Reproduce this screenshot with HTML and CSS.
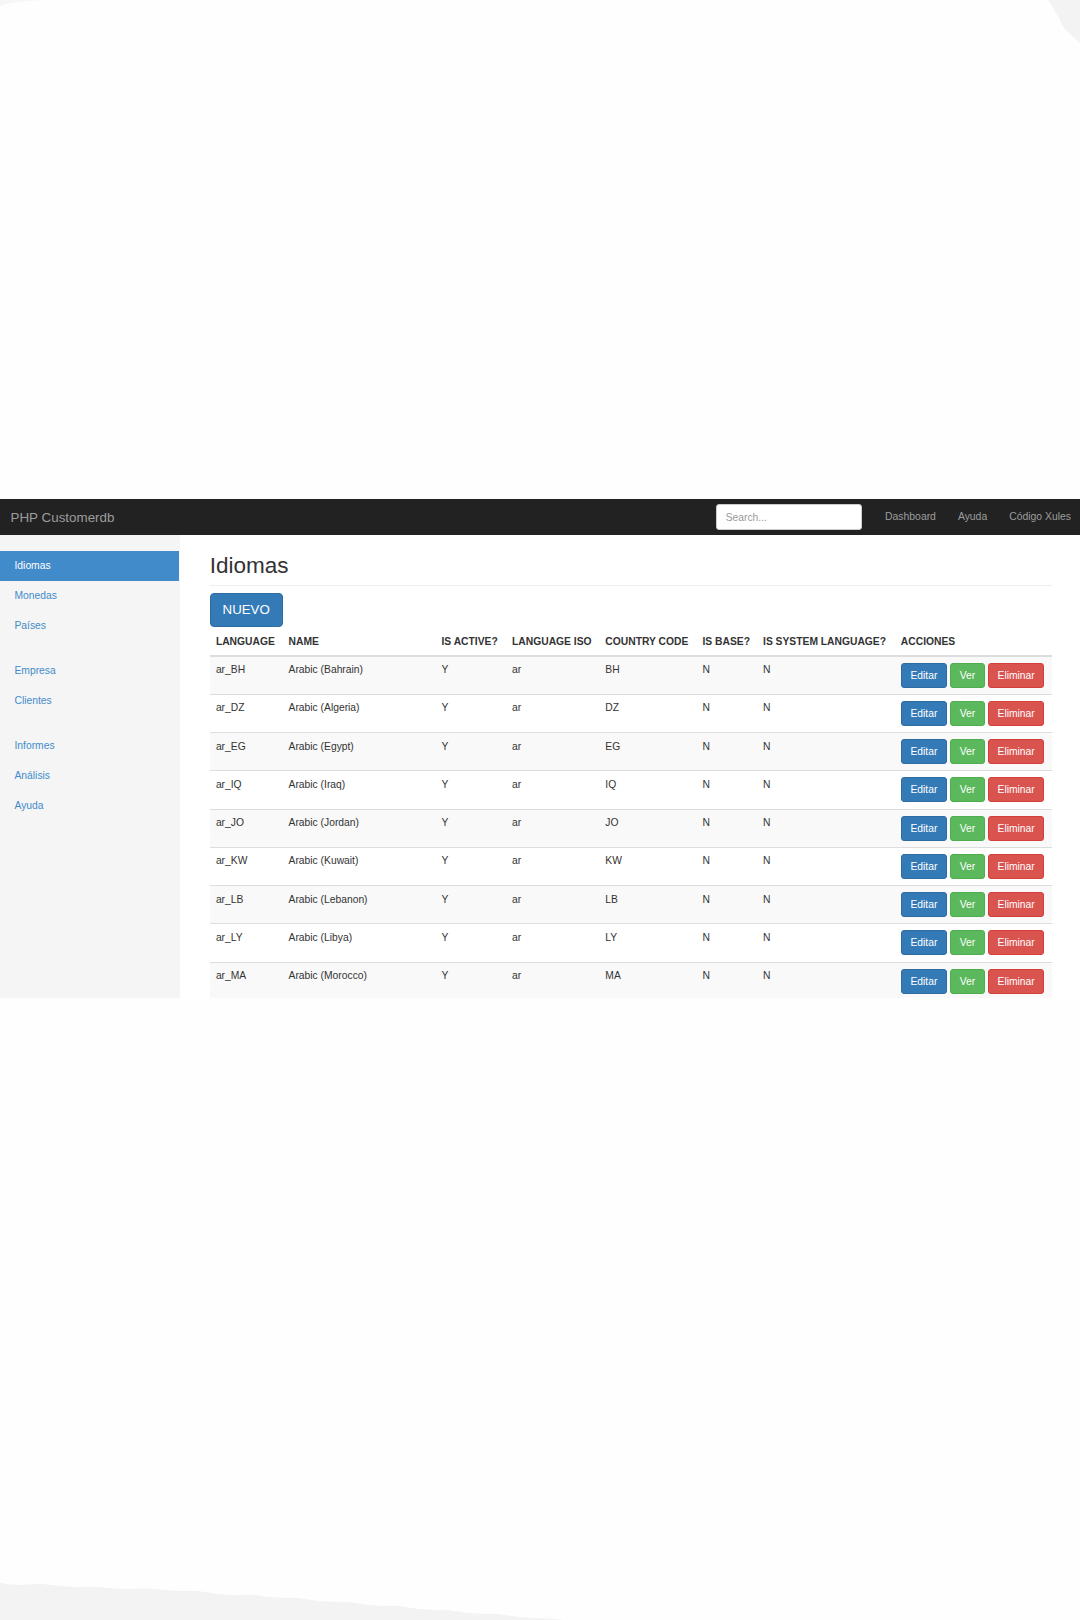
FILE: index.html
```html
<!DOCTYPE html>
<html lang="es">
<head>
<meta charset="utf-8">
<title>PHP Customerdb - Idiomas</title>
<link rel="stylesheet" href="styles.css">
</head>
<body>
<div class="page">
  <div class="app">
    <nav class="navbar">
      <a class="brand" href="#">PHP Customerdb</a>
      <input class="search" type="text" placeholder="Search...">
      <ul class="nav-links">
        <li><a href="#">Dashboard</a></li>
        <li><a href="#">Ayuda</a></li>
        <li><a href="#">Código Xules</a></li>
      </ul>
    </nav>
    <div class="body-row">
      <aside class="sidebar">
        <ul class="side-group">
          <li><a class="active" href="#">Idiomas</a></li>
          <li><a href="#">Monedas</a></li>
          <li><a href="#">Países</a></li>
        </ul>
        <ul class="side-group">
          <li><a href="#">Empresa</a></li>
          <li><a href="#">Clientes</a></li>
        </ul>
        <ul class="side-group">
          <li><a href="#">Informes</a></li>
          <li><a href="#">Análisis</a></li>
          <li><a href="#">Ayuda</a></li>
        </ul>
      </aside>
      <main class="main">
        <h1 class="page-title">Idiomas</h1>
        <button class="btn-new">NUEVO</button>
        <table class="grid">
          <colgroup>
            <col class="c1"><col class="c2"><col class="c3"><col class="c4">
            <col class="c5"><col class="c6"><col class="c7"><col class="c8">
          </colgroup>
          <thead>
            <tr>
              <th>LANGUAGE</th><th>NAME</th><th>IS ACTIVE?</th><th>LANGUAGE ISO</th>
              <th>COUNTRY CODE</th><th>IS BASE?</th><th>IS SYSTEM LANGUAGE?</th><th>ACCIONES</th>
            </tr>
          </thead>
          <tbody>
            <tr><td>ar_BH</td><td>Arabic (Bahrain)</td><td>Y</td><td>ar</td><td>BH</td><td>N</td><td>N</td>
              <td class="act"><div class="actions"><button class="b b-edit">Editar</button><button class="b b-view">Ver</button><button class="b b-del">Eliminar</button></div></td></tr>
            <tr><td>ar_DZ</td><td>Arabic (Algeria)</td><td>Y</td><td>ar</td><td>DZ</td><td>N</td><td>N</td>
              <td class="act"><div class="actions"><button class="b b-edit">Editar</button><button class="b b-view">Ver</button><button class="b b-del">Eliminar</button></div></td></tr>
            <tr><td>ar_EG</td><td>Arabic (Egypt)</td><td>Y</td><td>ar</td><td>EG</td><td>N</td><td>N</td>
              <td class="act"><div class="actions"><button class="b b-edit">Editar</button><button class="b b-view">Ver</button><button class="b b-del">Eliminar</button></div></td></tr>
            <tr><td>ar_IQ</td><td>Arabic (Iraq)</td><td>Y</td><td>ar</td><td>IQ</td><td>N</td><td>N</td>
              <td class="act"><div class="actions"><button class="b b-edit">Editar</button><button class="b b-view">Ver</button><button class="b b-del">Eliminar</button></div></td></tr>
            <tr><td>ar_JO</td><td>Arabic (Jordan)</td><td>Y</td><td>ar</td><td>JO</td><td>N</td><td>N</td>
              <td class="act"><div class="actions"><button class="b b-edit">Editar</button><button class="b b-view">Ver</button><button class="b b-del">Eliminar</button></div></td></tr>
            <tr><td>ar_KW</td><td>Arabic (Kuwait)</td><td>Y</td><td>ar</td><td>KW</td><td>N</td><td>N</td>
              <td class="act"><div class="actions"><button class="b b-edit">Editar</button><button class="b b-view">Ver</button><button class="b b-del">Eliminar</button></div></td></tr>
            <tr><td>ar_LB</td><td>Arabic (Lebanon)</td><td>Y</td><td>ar</td><td>LB</td><td>N</td><td>N</td>
              <td class="act"><div class="actions"><button class="b b-edit">Editar</button><button class="b b-view">Ver</button><button class="b b-del">Eliminar</button></div></td></tr>
            <tr><td>ar_LY</td><td>Arabic (Libya)</td><td>Y</td><td>ar</td><td>LY</td><td>N</td><td>N</td>
              <td class="act"><div class="actions"><button class="b b-edit">Editar</button><button class="b b-view">Ver</button><button class="b b-del">Eliminar</button></div></td></tr>
            <tr><td>ar_MA</td><td>Arabic (Morocco)</td><td>Y</td><td>ar</td><td>MA</td><td>N</td><td>N</td>
              <td class="act"><div class="actions"><button class="b b-edit">Editar</button><button class="b b-view">Ver</button><button class="b b-del">Eliminar</button></div></td></tr>
          </tbody>
        </table>
      </main>
    </div>
  </div>

  <svg class="deco deco-tl" viewBox="0 0 50 6" aria-hidden="true">
    <path d="M0 6 Q12 1 48 0 L0 0 Z" fill="#f6f6f6"/>
  </svg>
  <svg class="deco deco-tr" viewBox="0 0 32 43" aria-hidden="true">
    <path d="M0 0 Q8 12 12 20 Q14 26 17 29 L32 43 L32 0 Z" fill="#f3f3f3"/>
  </svg>
  <svg class="deco deco-bl" viewBox="0 0 565 37" aria-hidden="true">
    <path d="M0 0 Q10 2 22 2 Q35 1 42 1 Q60 3 75 4 Q90 3 100 4 Q115 6 130 6 Q145 5 155 6 Q170 8 185 8 Q195 7 205 9 Q220 12 235 12 Q245 11 255 12 Q270 15 285 15 Q295 14 305 16 Q320 19 335 19 Q345 18 355 20 Q370 23 385 23 Q395 22 405 24 Q420 27 435 27 Q445 26 455 28 Q470 31 485 31 Q495 30 505 32 Q520 35 535 35 Q548 35 565 37 L0 37 Z" fill="#f3f3f3"/>
  </svg>
</div>
</body>
</html>
```

FILE: styles.css
```css
* { box-sizing: border-box; }

html, body {
  margin: 0;
  padding: 0;
  background: #fefefe;
}

body {
  font-family: "Liberation Sans", Arial, Helvetica, sans-serif;
  color: #333;
}

.page {
  position: relative;
  width: 1080px;
  height: 1620px;
  padding-top: 499px;
  overflow: hidden;
}

.app {
  height: 499px;
  overflow: hidden;
  display: flex;
  flex-direction: column;
}

/* Navbar */
.navbar {
  flex: 0 0 36px;
  height: 36px;
  background: #222;
  display: flex;
  align-items: center;
  padding: 0 0 0 10.5px;
}

.brand {
  font-size: 13.4px;
  color: #9d9d9d;
  text-decoration: none;
}

.search {
  margin-left: auto;
  width: 146px;
  height: 26px;
  border: 1px solid #ccc;
  border-radius: 3px;
  background: #fff;
  padding: 0 8.6px;
  font-family: inherit;
  font-size: 10.3px;
  color: #555;
  outline: none;
}
.search::placeholder { color: #999; }

.nav-links {
  list-style: none;
  margin: 0 -2px 0 12px;
  padding: 0;
  display: flex;
}
.nav-links a {
  display: block;
  padding: 0 11px;
  font-size: 10.4px;
  line-height: 36px;
  color: #9d9d9d;
  text-decoration: none;
}

/* Body */
.body-row {
  flex: 1;
  display: flex;
  min-height: 0;
}

.sidebar {
  flex: 0 0 180px;
  background: #f5f5f5;
  padding-top: 16px;
}

.side-group {
  list-style: none;
  margin: 0 0 15px;
  padding: 0;
}
.side-group a {
  display: block;
  height: 30px;
  line-height: 30px;
  padding-left: 14.5px;
  font-size: 10.3px;
  color: #428bca;
  text-decoration: none;
}
.side-group a.active {
  background: #428bca;
  color: #fff;
  margin-right: 1px;
}

.main {
  flex: 1;
  background: #fff;
  padding: 0 28px 0 29.7px;
}

.page-title {
  margin: 18.5px 0 7px;
  padding-bottom: 7px;
  border-bottom: 1px solid #eee;
  font-size: 22.5px;
  line-height: 24.2px;
  font-weight: 500;
  color: #333;
}

.btn-new {
  display: block;
  width: 73px;
  height: 34px;
  padding: 0;
  border: 1px solid #2e6da4;
  border-radius: 4px;
  background: #337ab7;
  color: #fff;
  font-family: inherit;
  font-size: 13.3px;
}

/* Table */
.grid {
  width: 842.3px;
  margin-top: 2px;
  table-layout: fixed;
  border-collapse: separate;
  border-spacing: 0;
  font-size: 10.3px;
}
.c1 { width: 72.7px; }
.c2 { width: 152.9px; }
.c3 { width: 70.6px; }
.c4 { width: 93.3px; }
.c5 { width: 97.1px; }
.c6 { width: 60.6px; }
.c7 { width: 137.8px; }
.c8 { width: 157.3px; }

.grid th {
  text-align: left;
  font-weight: bold;
  padding: 6px 6.2px;
  line-height: 14px;
  border-bottom: 2px solid #ddd;
  white-space: nowrap;
  color: #333;
}

.grid td {
  padding: 6.5px 6.2px 6px;
  line-height: 14px;
  vertical-align: top;
  border-top: 1px solid #ddd;
  color: #333;
  white-space: nowrap;
}
.grid td.act { padding-top: 6px; padding-bottom: 6.25px; }
.grid tbody tr:first-child td { border-top: 0; }
.grid tbody tr:nth-child(odd) td { background: #f9f9f9; }

.actions {
  display: flex;
  gap: 3.2px;
}

.b {
  height: 25px;
  padding: 0 8.6px;
  border: 1px solid;
  border-radius: 3px;
  font-family: inherit;
  font-size: 10.3px;
  line-height: 23px;
  color: #fff;
}
.b-edit { background: #337ab7; border-color: #2e6da4; }
.b-view { background: #5cb85c; border-color: #4cae4c; }
.b-del  { background: #d9534f; border-color: #d43f3a; }

/* Page decorations (torn-paper corners) */
.deco {
  position: absolute;
  display: block;
}
.deco-tl { top: 0; left: 0; width: 50px; height: 6px; }
.deco-tr { top: 0; right: 0; width: 32px; height: 43px; }
.deco-bl { bottom: 0; left: 0; width: 565px; height: 37px; }
```
